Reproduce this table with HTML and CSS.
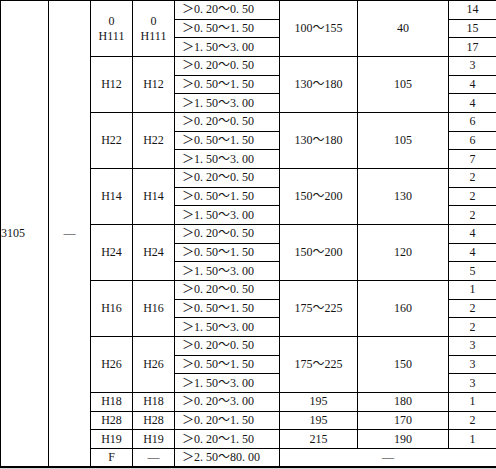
FILE: index.html
```html
<!DOCTYPE html>
<html lang="zh">
<head>
<meta charset="utf-8">
<title>3105</title>
<link rel="stylesheet" href="styles.css">
</head>
<body>
<div class="page">
<table class="spec">
  <colgroup>
    <col class="c-alloy"><col class="c-code"><col class="c-temper"><col class="c-temper">
    <col class="c-range"><col class="c-tensile"><col class="c-yield"><col class="c-elong">
  </colgroup>
  <tbody>
    <tr>
      <td rowspan="25" class="alloy">3105</td>
      <td rowspan="25">—</td>
      <td rowspan="3">0<br>H111</td>
      <td rowspan="3">0<br>H111</td>
      <td class="range">＞0. 20～0. 50</td>
      <td rowspan="3">100～155</td>
      <td rowspan="3">40</td>
      <td>14</td>
    </tr>
    <tr><td class="range">＞0. 50～1. 50</td><td>15</td></tr>
    <tr><td class="range">＞1. 50～3. 00</td><td>17</td></tr>

    <tr>
      <td rowspan="3">H12</td><td rowspan="3">H12</td>
      <td class="range">＞0. 20～0. 50</td>
      <td rowspan="3">130～180</td><td rowspan="3">105</td><td>3</td>
    </tr>
    <tr><td class="range">＞0. 50～1. 50</td><td>4</td></tr>
    <tr><td class="range">＞1. 50～3. 00</td><td>4</td></tr>

    <tr>
      <td rowspan="3">H22</td><td rowspan="3">H22</td>
      <td class="range">＞0. 20～0. 50</td>
      <td rowspan="3">130～180</td><td rowspan="3">105</td><td>6</td>
    </tr>
    <tr><td class="range">＞0. 50～1. 50</td><td>6</td></tr>
    <tr><td class="range">＞1. 50～3. 00</td><td>7</td></tr>

    <tr>
      <td rowspan="3">H14</td><td rowspan="3">H14</td>
      <td class="range">＞0. 20～0. 50</td>
      <td rowspan="3">150～200</td><td rowspan="3">130</td><td>2</td>
    </tr>
    <tr><td class="range">＞0. 50～1. 50</td><td>2</td></tr>
    <tr><td class="range">＞1. 50～3. 00</td><td>2</td></tr>

    <tr>
      <td rowspan="3">H24</td><td rowspan="3">H24</td>
      <td class="range">＞0. 20～0. 50</td>
      <td rowspan="3">150～200</td><td rowspan="3">120</td><td>4</td>
    </tr>
    <tr><td class="range">＞0. 50～1. 50</td><td>4</td></tr>
    <tr><td class="range">＞1. 50～3. 00</td><td>5</td></tr>

    <tr>
      <td rowspan="3">H16</td><td rowspan="3">H16</td>
      <td class="range">＞0. 20～0. 50</td>
      <td rowspan="3">175～225</td><td rowspan="3">160</td><td>1</td>
    </tr>
    <tr><td class="range">＞0. 50～1. 50</td><td>2</td></tr>
    <tr><td class="range">＞1. 50～3. 00</td><td>2</td></tr>

    <tr>
      <td rowspan="3">H26</td><td rowspan="3">H26</td>
      <td class="range">＞0. 20～0. 50</td>
      <td rowspan="3">175～225</td><td rowspan="3">150</td><td>3</td>
    </tr>
    <tr><td class="range">＞0. 50～1. 50</td><td>3</td></tr>
    <tr><td class="range">＞1. 50～3. 00</td><td>3</td></tr>

    <tr><td>H18</td><td>H18</td><td class="range">＞0. 20～3. 00</td><td>195</td><td>180</td><td>1</td></tr>
    <tr><td>H28</td><td>H28</td><td class="range">＞0. 20～1. 50</td><td>195</td><td>170</td><td>2</td></tr>
    <tr><td>H19</td><td>H19</td><td class="range">＞0. 20～1. 50</td><td>215</td><td>190</td><td>1</td></tr>
    <tr><td>F</td><td>—</td><td class="range">＞2. 50～80. 00</td><td colspan="3">—</td></tr>
  </tbody>
</table>
</div>
</body>
</html>
```

FILE: styles.css
```css
html, body {
  margin: 0;
  padding: 0;
  background: #fff;
}

.page {
  width: 496px;
  border-bottom: 1px solid #d4d4d4;
}

.spec {
  width: 496px;
  table-layout: fixed;
  border-collapse: collapse;
  font-family: "Liberation Serif", "Noto Sans CJK SC", serif;
  font-size: 12px;
  line-height: 15px;
  color: #151515;
  border-bottom: 2px solid #000;
}

.c-alloy { width: 48px; }
.c-code { width: 42px; }
.c-temper { width: 42px; }
.c-range { width: 105px; }
.c-tensile { width: 78px; }
.c-yield { width: 91px; }
.c-elong { width: 48px; }

.spec tr {
  height: 18.68px;
}

.spec td {
  border: 1px solid #000;
  padding: 0;
  text-align: center;
  vertical-align: middle;
  white-space: nowrap;
  overflow: hidden;
}

.spec td.alloy {
  text-align: left;
}

.spec td.range {
  text-align: left;
  padding-left: 7px;
}
```
